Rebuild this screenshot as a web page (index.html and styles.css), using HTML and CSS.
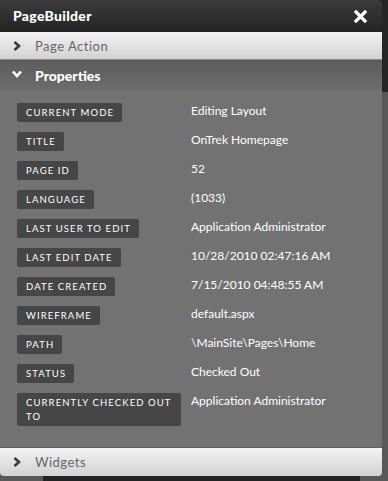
FILE: index.html
```html
<!DOCTYPE html>
<html lang="en">
<head>
  <meta charset="UTF-8">
  <title>PageBuilder</title>
  <link rel="stylesheet" href="styles.css">
</head>
<body>
  <div class="panel">
    <header class="titlebar">
      <h1>PageBuilder</h1>
      <svg class="close" width="13" height="13" viewBox="0 0 13 13">
        <path d="M2 2 L11 11 M11 2 L2 11" stroke="#fff" stroke-width="3.2" stroke-linecap="square"/>
      </svg>
    </header>

    <div class="section-bar">
      <svg class="chev" width="8" height="10" viewBox="0 0 8 10">
        <path d="M1.5 1 L6 5 L1.5 9" fill="none" stroke="#3a3a3a" stroke-width="2.6"/>
      </svg>
      <span>Page Action</span>
    </div>

    <div class="section-open">
      <svg class="chev" width="10" height="8" viewBox="0 0 10 8">
        <path d="M1 1.5 L5 6 L9 1.5" fill="none" stroke="#fff" stroke-width="2.6"/>
      </svg>
      <span>Properties</span>
    </div>

    <div class="props">
      <div class="prop"><span class="label">Current Mode</span><span class="value">Editing Layout</span></div>
      <div class="prop"><span class="label">Title</span><span class="value">OnTrek Homepage</span></div>
      <div class="prop"><span class="label">Page ID</span><span class="value">52</span></div>
      <div class="prop"><span class="label">Language</span><span class="value">(1033)</span></div>
      <div class="prop"><span class="label">Last User to Edit</span><span class="value">Application Administrator</span></div>
      <div class="prop"><span class="label">Last Edit Date</span><span class="value">10/28/2010 02:47:16 AM</span></div>
      <div class="prop"><span class="label">Date Created</span><span class="value">7/15/2010 04:48:55 AM</span></div>
      <div class="prop"><span class="label">Wireframe</span><span class="value">default.aspx</span></div>
      <div class="prop"><span class="label">Path</span><span class="value">\MainSite\Pages\Home</span></div>
      <div class="prop"><span class="label">Status</span><span class="value">Checked Out</span></div>
      <div class="prop"><span class="label">Currently Checked Out To</span><span class="value">Application Administrator</span></div>
    </div>

    <div class="section-bar last">
      <svg class="chev" width="8" height="10" viewBox="0 0 8 10">
        <path d="M1.5 1 L6 5 L1.5 9" fill="none" stroke="#3a3a3a" stroke-width="2.6"/>
      </svg>
      <span>Widgets</span>
    </div>
  </div>
  <div class="under"></div>
</body>
</html>
```

FILE: styles.css
```css
* { margin: 0; padding: 0; box-sizing: border-box; }
body {
  font-family: 'Lato', 'DejaVu Sans', sans-serif;
  background: linear-gradient(#262626 0, #262626 92px, #585858 92px);
  width: 388px;
  height: 481px;
  overflow: hidden;
}
.panel {
  width: 382px;
  height: 476px;
  background: #727272;
  border-radius: 0 6px 4px 4px;
  overflow: hidden;
  display: flex;
  flex-direction: column;
}
.titlebar {
  height: 32px;
  background: linear-gradient(#3b3b3b, #242424);
  display: flex;
  align-items: center;
  justify-content: space-between;
  padding: 0 15px 2px 13px;
}
.titlebar h1 {
  font-size: 14px;
  font-weight: 900;
  color: #fff;
  letter-spacing: 0.3px;
}
.close { margin-top: 2px; }
.section-bar {
  height: 28px;
  background: linear-gradient(#f3f3f3, #d2d2d2);
  border-bottom: 1px solid #8a8a8a;
  display: flex;
  align-items: center;
  padding-left: 13px;
  font-size: 13px;
  color: #6a6470;
  letter-spacing: 0.5px;
}
.section-bar .chev { margin-right: 14px; }
.section-bar.last {
  margin-top: auto;
  border-bottom: none;
  border-top: 1px solid #5e5e5e;
  height: 29px;
}
.section-open {
  height: 30px;
  background: linear-gradient(#5c5c5c, #6c6c6c);
  display: flex;
  align-items: center;
  padding-left: 12px;
  font-size: 14px;
  font-weight: 900;
  color: #fff;
}
.section-open .chev { margin-right: 13px; margin-top: -2px; }
.props {
  display: flex;
  flex-direction: column;
  gap: 10px;
  padding: 13px 10px 0 17px;
}
.prop {
  display: grid;
  grid-template-columns: 164px 1fr;
  column-gap: 10px;
  align-items: start;
}
.label {
  justify-self: start;
  background: #464646;
  border-radius: 2px;
  color: #fff;
  font-size: 9.5px;
  font-weight: 400;
  text-transform: uppercase;
  letter-spacing: 1.1px;
  line-height: 14px;
  padding: 3px 8px 2px 9px;
}
.value {
  color: #fff;
  font-size: 12px;
  line-height: 14px;
  padding-top: 1px;
}
.under {
  height: 5px;
  margin-left: 43px;
  width: 317px;
  background: #232323;
}
```
